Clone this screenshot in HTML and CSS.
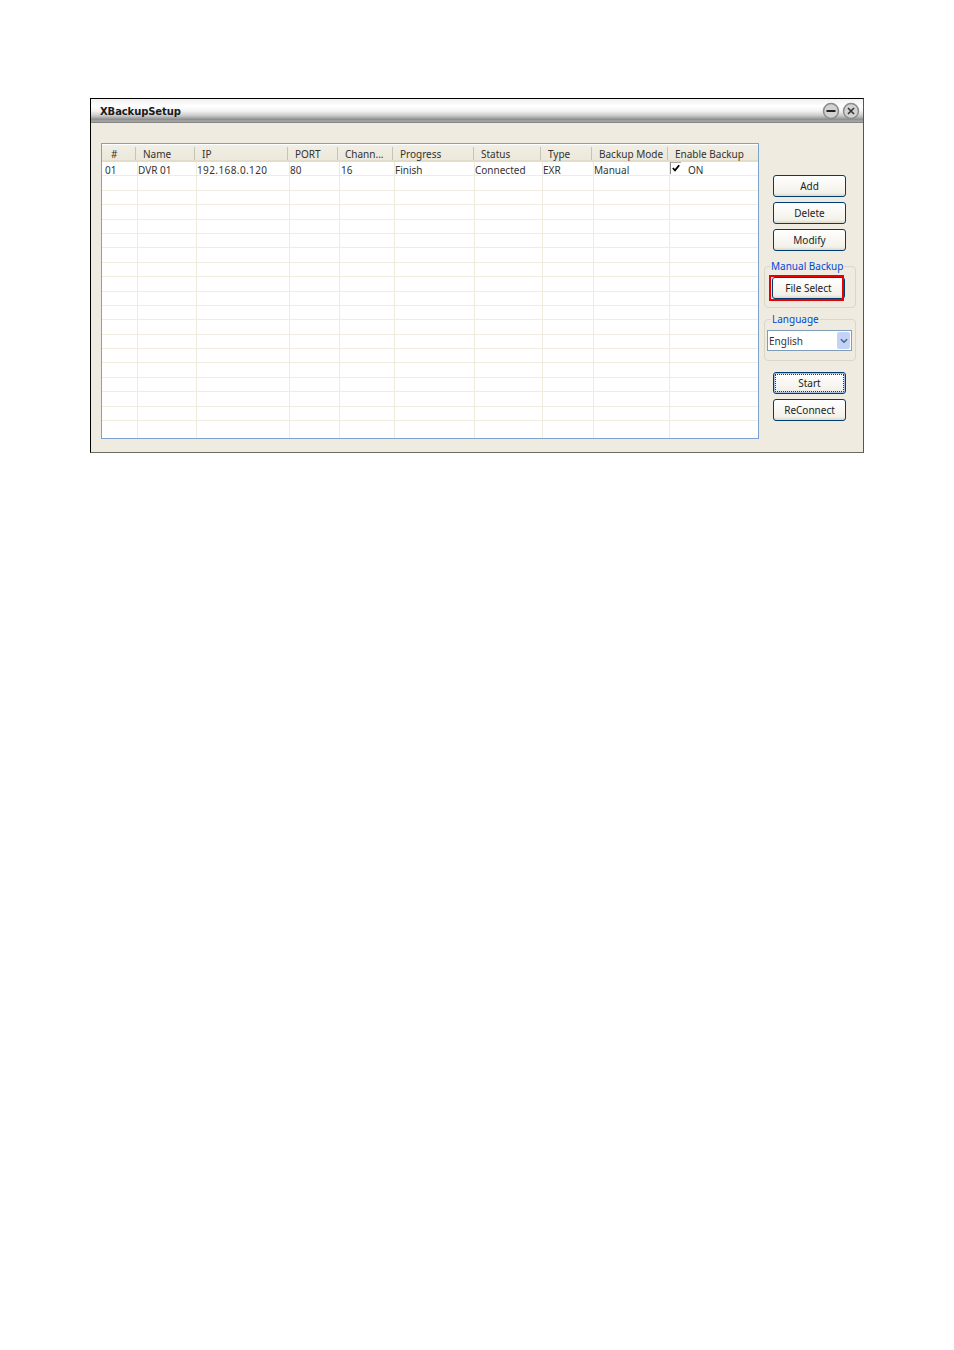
FILE: index.html
```html
<!DOCTYPE html>
<html lang="en">
<head>
<meta charset="utf-8">
<title>XBackupSetup</title>
<link rel="stylesheet" href="styles.css">
</head>
<body>
<div class="window">
  <div class="titlebar">
    <span class="title">XBackupSetup</span>
    <div class="win-btns">
      <svg class="win-btn" viewBox="0 0 18 18"><circle cx="9" cy="9" r="7.5" fill="#d2d2d2" stroke="#8a8a8a" stroke-width="1.5"/><path d="M4.500 9h9" stroke="#222" stroke-width="2"/></svg>
      <svg class="win-btn" viewBox="0 0 18 18"><circle cx="9" cy="9" r="7.5" fill="#d2d2d2" stroke="#8a8a8a" stroke-width="1.5"/><path d="M6 6l6 6M12 6l-6 6" stroke="#333" stroke-width="1.6"/></svg>
    </div>
  </div>
  <div class="content">
    <div class="list">
      <div class="head">
        <div class="hc hash">#</div><div class="hc">Name</div><div class="hc">IP</div><div class="hc">PORT</div><div class="hc">Chann...</div><div class="hc">Progress</div><div class="hc">Status</div><div class="hc">Type</div><div class="hc">Backup Mode</div><div class="hc last">Enable Backup</div>
      </div>
      <div class="rows">
        <div class="row"><div class="c first">01</div><div class="c">DVR 01</div><div class="c ip">192.168.0.120</div><div class="c">80</div><div class="c two">16</div><div class="c">Finish</div><div class="c">Connected</div><div class="c">EXR</div><div class="c">Manual</div><div class="c en"><span class="chk"><svg viewBox="0 0 11 11"><path d="M2 5.500l2.400 2.600L9 2.500" fill="none" stroke="#000" stroke-width="2"/></svg></span>ON</div></div>
        <div class="row"><div class="c"></div><div class="c"></div><div class="c"></div><div class="c"></div><div class="c"></div><div class="c"></div><div class="c"></div><div class="c"></div><div class="c"></div><div class="c"></div></div>
        <div class="row"><div class="c"></div><div class="c"></div><div class="c"></div><div class="c"></div><div class="c"></div><div class="c"></div><div class="c"></div><div class="c"></div><div class="c"></div><div class="c"></div></div>
        <div class="row"><div class="c"></div><div class="c"></div><div class="c"></div><div class="c"></div><div class="c"></div><div class="c"></div><div class="c"></div><div class="c"></div><div class="c"></div><div class="c"></div></div>
        <div class="row"><div class="c"></div><div class="c"></div><div class="c"></div><div class="c"></div><div class="c"></div><div class="c"></div><div class="c"></div><div class="c"></div><div class="c"></div><div class="c"></div></div>
        <div class="row"><div class="c"></div><div class="c"></div><div class="c"></div><div class="c"></div><div class="c"></div><div class="c"></div><div class="c"></div><div class="c"></div><div class="c"></div><div class="c"></div></div>
        <div class="row"><div class="c"></div><div class="c"></div><div class="c"></div><div class="c"></div><div class="c"></div><div class="c"></div><div class="c"></div><div class="c"></div><div class="c"></div><div class="c"></div></div>
        <div class="row"><div class="c"></div><div class="c"></div><div class="c"></div><div class="c"></div><div class="c"></div><div class="c"></div><div class="c"></div><div class="c"></div><div class="c"></div><div class="c"></div></div>
        <div class="row"><div class="c"></div><div class="c"></div><div class="c"></div><div class="c"></div><div class="c"></div><div class="c"></div><div class="c"></div><div class="c"></div><div class="c"></div><div class="c"></div></div>
        <div class="row"><div class="c"></div><div class="c"></div><div class="c"></div><div class="c"></div><div class="c"></div><div class="c"></div><div class="c"></div><div class="c"></div><div class="c"></div><div class="c"></div></div>
        <div class="row"><div class="c"></div><div class="c"></div><div class="c"></div><div class="c"></div><div class="c"></div><div class="c"></div><div class="c"></div><div class="c"></div><div class="c"></div><div class="c"></div></div>
        <div class="row"><div class="c"></div><div class="c"></div><div class="c"></div><div class="c"></div><div class="c"></div><div class="c"></div><div class="c"></div><div class="c"></div><div class="c"></div><div class="c"></div></div>
        <div class="row"><div class="c"></div><div class="c"></div><div class="c"></div><div class="c"></div><div class="c"></div><div class="c"></div><div class="c"></div><div class="c"></div><div class="c"></div><div class="c"></div></div>
        <div class="row"><div class="c"></div><div class="c"></div><div class="c"></div><div class="c"></div><div class="c"></div><div class="c"></div><div class="c"></div><div class="c"></div><div class="c"></div><div class="c"></div></div>
        <div class="row"><div class="c"></div><div class="c"></div><div class="c"></div><div class="c"></div><div class="c"></div><div class="c"></div><div class="c"></div><div class="c"></div><div class="c"></div><div class="c"></div></div>
        <div class="row"><div class="c"></div><div class="c"></div><div class="c"></div><div class="c"></div><div class="c"></div><div class="c"></div><div class="c"></div><div class="c"></div><div class="c"></div><div class="c"></div></div>
        <div class="row"><div class="c"></div><div class="c"></div><div class="c"></div><div class="c"></div><div class="c"></div><div class="c"></div><div class="c"></div><div class="c"></div><div class="c"></div><div class="c"></div></div>
        <div class="row"><div class="c"></div><div class="c"></div><div class="c"></div><div class="c"></div><div class="c"></div><div class="c"></div><div class="c"></div><div class="c"></div><div class="c"></div><div class="c"></div></div>
        <div class="row end"><div class="c"></div><div class="c"></div><div class="c"></div><div class="c"></div><div class="c"></div><div class="c"></div><div class="c"></div><div class="c"></div><div class="c"></div><div class="c"></div></div>
      </div>
    </div>
    <div class="side">
      <button class="btn">Add</button>
      <button class="btn">Delete</button>
      <button class="btn">Modify</button>
      <fieldset class="group manual">
        <legend>Manual Backup</legend>
        <button class="btn marked">File Select</button>
      </fieldset>
      <fieldset class="group lang">
        <legend>Language</legend>
        <div class="combo"><span>English</span><span class="arrow"><svg viewBox="0 0 9 6"><path d="M1 1l3.500 3.500L8 1" fill="none" stroke="#4d6185" stroke-width="1.600"/></svg></span></div>
      </fieldset>
      <button class="btn start">Start</button>
      <button class="btn">ReConnect</button>
    </div>
  </div>
</div>
</body>
</html>
```
FILE: styles.css
```css
*, *::after { box-sizing: border-box; }
html, body { margin: 0; background: #fff; }
body { padding: 98px 0 0 90px; font-family: "Noto Sans", "Liberation Sans", sans-serif; font-size: 10px; color: #222; }

.window { width: 774px; height: 355px; background: #efebe0; border: 1px solid #000; border-right-color: #555; border-bottom-color: #6a6a60; }

.titlebar {
  height: 24px;
  display: flex;
  align-items: center;
  justify-content: space-between;
  padding: 0 3px 0 9px;
  background: linear-gradient(#f0f0f0 0, #fff 30%, #f2f2f2 50%, #c8c8c8 70%, #8e8e8e 85%, #a9a9a9 93%, #767676 100%);
}
.title { font-family: "DejaVu Sans", sans-serif; font-weight: 700; font-size: 10px; color: #1a1a1a; letter-spacing: -.1px; }
.win-btns { display: flex; gap: 2px; }
.win-btn { width: 18px; height: 18px; display: block; }

.content { display: flex; padding: 20px 0 0 10px; }

.list { width: 658px; height: 296px; background: #fff; border: 1px solid #7ba2cc; padding: 1px 0; flex: none; }
.head, .row { display: grid; grid-template-columns: 35px 59px 93px 50px 55px 80px 68px 51px 76px 79px; }
.head { height: 17px; border-bottom: 2px solid #e2dccb; grid-template-columns: 34px 59px 93px 50px 55px 81px 67px 51px 76px 79px; background: linear-gradient(#f1eee4, #ece8da); }
.hc { padding-left: 7px; border-right: 1px solid #c8c4b4; white-space: nowrap; height: 13px; margin-top: 2px; line-height: 14px; color: #333; }
.hc.hash { padding-left: 9px; }
.hc.last { border-right: 0; }

.rows { height: 277px; }
.row { height: 14.4px; border-bottom: 1px solid #f0ecdf; }
.row.end { height: 17px; border-bottom: 0; }
.c { border-left: 1px solid #efebdc; line-height: 14px; padding-top: 1px; white-space: nowrap; color: #333; }
.c:first-child { border-left: 0; }
.c.first { padding-left: 3px; }
.c.two { padding-left: 1px; }
.c.ip { letter-spacing: .4px; }
.c.en { display: flex; align-items: flex-start; padding-top: 0; line-height: 16px; }
.chk { width: 11px; height: 12px; margin-right: 7px; border-top: 1px solid #aaa; border-left: 1px solid #888; display: block; }
.chk svg { width: 10px; height: 10px; display: block; }

.side { width: 92px; margin-left: 6px; padding-top: 32px; display: flex; flex-direction: column; align-items: flex-start; flex: none; }
.btn {
  width: 73px;
  height: 22px;
  margin: 0 0 5px 8px;
  padding: 0;
  font: inherit;
  color: #222;
  border: 1px solid #003c74;
  border-radius: 3px;
  background: linear-gradient(#fff, #f3f1e9 85%, #dcd8c8);
}
.btn.start { margin-top: 11px; box-shadow: inset 0 0 0 1px #a9bfe4; outline: 1px dotted #333; outline-offset: -3px; }
.marked { position: relative; margin: 0 0 0 7px; width: 73px; }
.marked::after { content: ""; position: absolute; left: -4px; top: -3px; width: 75px; height: 26px; border: 2px solid #ed0000; }

.group { width: 92px; margin: 0 0 0 -1px; padding: 0; border: 1px solid #dad7c8; border-radius: 4px; }
.group legend { color: #0046d5; padding: 0 1px; margin-left: 4px; line-height: 12px; height: 12px; white-space: nowrap; }
.manual { height: 48px; margin-top: 4px; padding-top: 5px; margin-bottom: 5px; }
.manual legend { margin-left: 5px; }
.lang { height: 48px; padding: 5px 0 0 2px; }
.combo { width: 85px; height: 21px; background: #fff; border: 1px solid #7f9db9; display: flex; justify-content: space-between; align-items: center; padding: 0 1px; color: #333; }
.arrow { width: 13px; height: 17px; background: #c3d3f8; border-radius: 2px; display: flex; align-items: center; justify-content: center; }
.arrow svg { width: 8px; height: 6px; display: block; }
```
